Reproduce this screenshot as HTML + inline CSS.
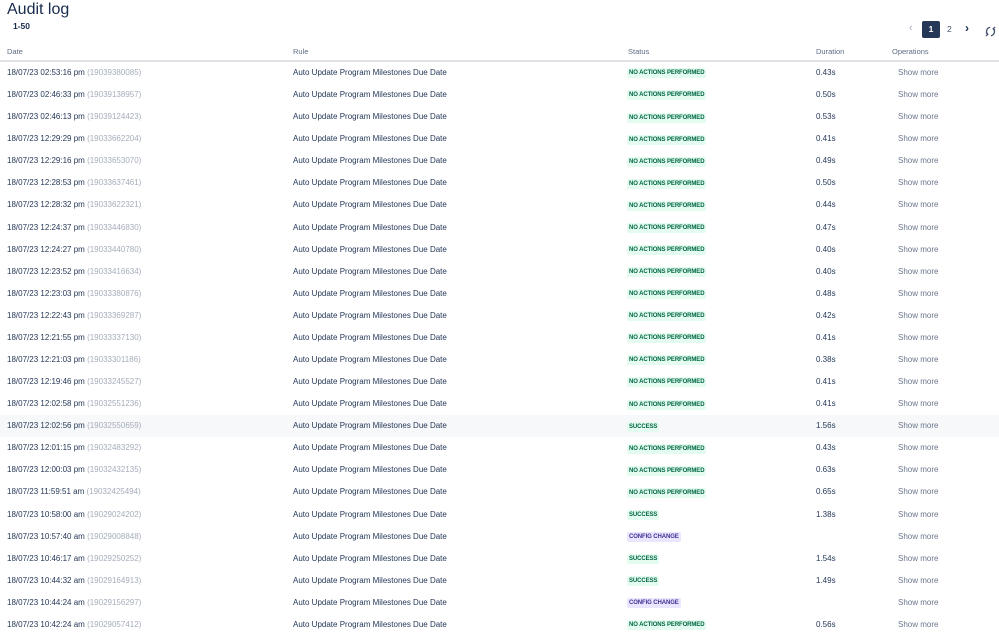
<!DOCTYPE html>
<html><head><meta charset="utf-8"><style>
*{margin:0;padding:0;box-sizing:border-box}
body{width:999px;height:633px;overflow:hidden;background:#fff;font-family:"Liberation Sans",sans-serif;color:#172b4d;position:relative}
h1{position:absolute;left:7px;top:1px;font-size:16px;font-weight:normal;color:#172b4d}
.range{position:absolute;left:13px;top:21px;font-size:8.5px;font-weight:bold}
.pg{position:absolute;top:21px;font-size:8.5px;color:#42526e}
.p1{left:922px;width:18px;height:17px;background:#253858;color:#fff;border-radius:2px;text-align:center;line-height:17px;font-weight:bold}
.hdr{position:absolute;top:47px;left:0;width:999px;height:15px;border-bottom:2px solid #dfe1e6;font-size:7.5px;color:#5e6c84}
.hdr span,.row span{position:absolute;white-space:nowrap}
.rows{position:absolute;top:62px;left:0;width:999px}
.row{position:relative;height:22.08px;font-size:8px;line-height:22.08px;color:#253858}
.row.hl{background:#f7f8f9}
.row span.id{position:static;color:#a5adba}
.c1{left:7px}.c2{left:293px}.c3{left:627px}.c4{left:816px}.c5{left:898px;color:#6b778c}
.row span.lz{position:static;display:inline-block;font-size:6px;font-weight:bold;line-height:10px;height:10px;padding:0 2px;border-radius:2px;vertical-align:middle;margin-top:1px;white-space:nowrap;letter-spacing:-0.1px}
.n,.s{background:#e3fcef;color:#006644}
.c{background:#eae6ff;color:#403294}
</style></head><body>
<h1>Audit log</h1>
<div class="range">1-50</div>
<div class="pg" style="left:909px;color:#a5adba;font-size:11px;top:22px">&#8249;</div>
<div class="pg p1">1</div>
<div class="pg" style="left:947px;top:24px">2</div>
<div class="pg" style="left:965px;font-size:12px;top:21px;color:#172b4d;font-weight:bold">&#8250;</div>
<svg style="position:absolute;left:985px;top:26px" width="11" height="11" viewBox="0 0 12 12" fill="none" stroke="#42526e" stroke-width="1.4" stroke-linecap="round"><path d="M5 1.5 A4.5 4.5 0 0 0 3 9"/><path d="M1.5 7.5 L3 9 L1.5 10.5"/><path d="M7 10.5 A4.5 4.5 0 0 0 9 3"/><path d="M10.5 4.5 L9 3 L10.5 1.5"/></svg>
<div class="hdr"><span style="left:7px">Date</span><span style="left:293px">Rule</span><span style="left:628px">Status</span><span style="left:816px">Duration</span><span style="left:892px">Operations</span></div>
<div class="rows">
<div class="row"><span class="c1">18/07/23 02:53:16 pm <span class="id">(19039380085)</span></span><span class="c2">Auto Update Program Milestones Due Date</span><span class="c3"><span class="lz n">NO ACTIONS PERFORMED</span></span><span class="c4">0.43s</span><span class="c5">Show more</span></div>
<div class="row"><span class="c1">18/07/23 02:46:33 pm <span class="id">(19039138957)</span></span><span class="c2">Auto Update Program Milestones Due Date</span><span class="c3"><span class="lz n">NO ACTIONS PERFORMED</span></span><span class="c4">0.50s</span><span class="c5">Show more</span></div>
<div class="row"><span class="c1">18/07/23 02:46:13 pm <span class="id">(19039124423)</span></span><span class="c2">Auto Update Program Milestones Due Date</span><span class="c3"><span class="lz n">NO ACTIONS PERFORMED</span></span><span class="c4">0.53s</span><span class="c5">Show more</span></div>
<div class="row"><span class="c1">18/07/23 12:29:29 pm <span class="id">(19033662204)</span></span><span class="c2">Auto Update Program Milestones Due Date</span><span class="c3"><span class="lz n">NO ACTIONS PERFORMED</span></span><span class="c4">0.41s</span><span class="c5">Show more</span></div>
<div class="row"><span class="c1">18/07/23 12:29:16 pm <span class="id">(19033653070)</span></span><span class="c2">Auto Update Program Milestones Due Date</span><span class="c3"><span class="lz n">NO ACTIONS PERFORMED</span></span><span class="c4">0.49s</span><span class="c5">Show more</span></div>
<div class="row"><span class="c1">18/07/23 12:28:53 pm <span class="id">(19033637461)</span></span><span class="c2">Auto Update Program Milestones Due Date</span><span class="c3"><span class="lz n">NO ACTIONS PERFORMED</span></span><span class="c4">0.50s</span><span class="c5">Show more</span></div>
<div class="row"><span class="c1">18/07/23 12:28:32 pm <span class="id">(19033622321)</span></span><span class="c2">Auto Update Program Milestones Due Date</span><span class="c3"><span class="lz n">NO ACTIONS PERFORMED</span></span><span class="c4">0.44s</span><span class="c5">Show more</span></div>
<div class="row"><span class="c1">18/07/23 12:24:37 pm <span class="id">(19033446830)</span></span><span class="c2">Auto Update Program Milestones Due Date</span><span class="c3"><span class="lz n">NO ACTIONS PERFORMED</span></span><span class="c4">0.47s</span><span class="c5">Show more</span></div>
<div class="row"><span class="c1">18/07/23 12:24:27 pm <span class="id">(19033440780)</span></span><span class="c2">Auto Update Program Milestones Due Date</span><span class="c3"><span class="lz n">NO ACTIONS PERFORMED</span></span><span class="c4">0.40s</span><span class="c5">Show more</span></div>
<div class="row"><span class="c1">18/07/23 12:23:52 pm <span class="id">(19033416634)</span></span><span class="c2">Auto Update Program Milestones Due Date</span><span class="c3"><span class="lz n">NO ACTIONS PERFORMED</span></span><span class="c4">0.40s</span><span class="c5">Show more</span></div>
<div class="row"><span class="c1">18/07/23 12:23:03 pm <span class="id">(19033380876)</span></span><span class="c2">Auto Update Program Milestones Due Date</span><span class="c3"><span class="lz n">NO ACTIONS PERFORMED</span></span><span class="c4">0.48s</span><span class="c5">Show more</span></div>
<div class="row"><span class="c1">18/07/23 12:22:43 pm <span class="id">(19033369287)</span></span><span class="c2">Auto Update Program Milestones Due Date</span><span class="c3"><span class="lz n">NO ACTIONS PERFORMED</span></span><span class="c4">0.42s</span><span class="c5">Show more</span></div>
<div class="row"><span class="c1">18/07/23 12:21:55 pm <span class="id">(19033337130)</span></span><span class="c2">Auto Update Program Milestones Due Date</span><span class="c3"><span class="lz n">NO ACTIONS PERFORMED</span></span><span class="c4">0.41s</span><span class="c5">Show more</span></div>
<div class="row"><span class="c1">18/07/23 12:21:03 pm <span class="id">(19033301186)</span></span><span class="c2">Auto Update Program Milestones Due Date</span><span class="c3"><span class="lz n">NO ACTIONS PERFORMED</span></span><span class="c4">0.38s</span><span class="c5">Show more</span></div>
<div class="row"><span class="c1">18/07/23 12:19:46 pm <span class="id">(19033245527)</span></span><span class="c2">Auto Update Program Milestones Due Date</span><span class="c3"><span class="lz n">NO ACTIONS PERFORMED</span></span><span class="c4">0.41s</span><span class="c5">Show more</span></div>
<div class="row"><span class="c1">18/07/23 12:02:58 pm <span class="id">(19032551236)</span></span><span class="c2">Auto Update Program Milestones Due Date</span><span class="c3"><span class="lz n">NO ACTIONS PERFORMED</span></span><span class="c4">0.41s</span><span class="c5">Show more</span></div>
<div class="row hl"><span class="c1">18/07/23 12:02:56 pm <span class="id">(19032550659)</span></span><span class="c2">Auto Update Program Milestones Due Date</span><span class="c3"><span class="lz s">SUCCESS</span></span><span class="c4">1.56s</span><span class="c5">Show more</span></div>
<div class="row"><span class="c1">18/07/23 12:01:15 pm <span class="id">(19032483292)</span></span><span class="c2">Auto Update Program Milestones Due Date</span><span class="c3"><span class="lz n">NO ACTIONS PERFORMED</span></span><span class="c4">0.43s</span><span class="c5">Show more</span></div>
<div class="row"><span class="c1">18/07/23 12:00:03 pm <span class="id">(19032432135)</span></span><span class="c2">Auto Update Program Milestones Due Date</span><span class="c3"><span class="lz n">NO ACTIONS PERFORMED</span></span><span class="c4">0.63s</span><span class="c5">Show more</span></div>
<div class="row"><span class="c1">18/07/23 11:59:51 am <span class="id">(19032425494)</span></span><span class="c2">Auto Update Program Milestones Due Date</span><span class="c3"><span class="lz n">NO ACTIONS PERFORMED</span></span><span class="c4">0.65s</span><span class="c5">Show more</span></div>
<div class="row"><span class="c1">18/07/23 10:58:00 am <span class="id">(19029024202)</span></span><span class="c2">Auto Update Program Milestones Due Date</span><span class="c3"><span class="lz s">SUCCESS</span></span><span class="c4">1.38s</span><span class="c5">Show more</span></div>
<div class="row"><span class="c1">18/07/23 10:57:40 am <span class="id">(19029008848)</span></span><span class="c2">Auto Update Program Milestones Due Date</span><span class="c3"><span class="lz c">CONFIG CHANGE</span></span><span class="c5">Show more</span></div>
<div class="row"><span class="c1">18/07/23 10:46:17 am <span class="id">(19029250252)</span></span><span class="c2">Auto Update Program Milestones Due Date</span><span class="c3"><span class="lz s">SUCCESS</span></span><span class="c4">1.54s</span><span class="c5">Show more</span></div>
<div class="row"><span class="c1">18/07/23 10:44:32 am <span class="id">(19029164913)</span></span><span class="c2">Auto Update Program Milestones Due Date</span><span class="c3"><span class="lz s">SUCCESS</span></span><span class="c4">1.49s</span><span class="c5">Show more</span></div>
<div class="row"><span class="c1">18/07/23 10:44:24 am <span class="id">(19029156297)</span></span><span class="c2">Auto Update Program Milestones Due Date</span><span class="c3"><span class="lz c">CONFIG CHANGE</span></span><span class="c5">Show more</span></div>
<div class="row"><span class="c1">18/07/23 10:42:24 am <span class="id">(19029057412)</span></span><span class="c2">Auto Update Program Milestones Due Date</span><span class="c3"><span class="lz n">NO ACTIONS PERFORMED</span></span><span class="c4">0.56s</span><span class="c5">Show more</span></div>
</div>
</body></html>
